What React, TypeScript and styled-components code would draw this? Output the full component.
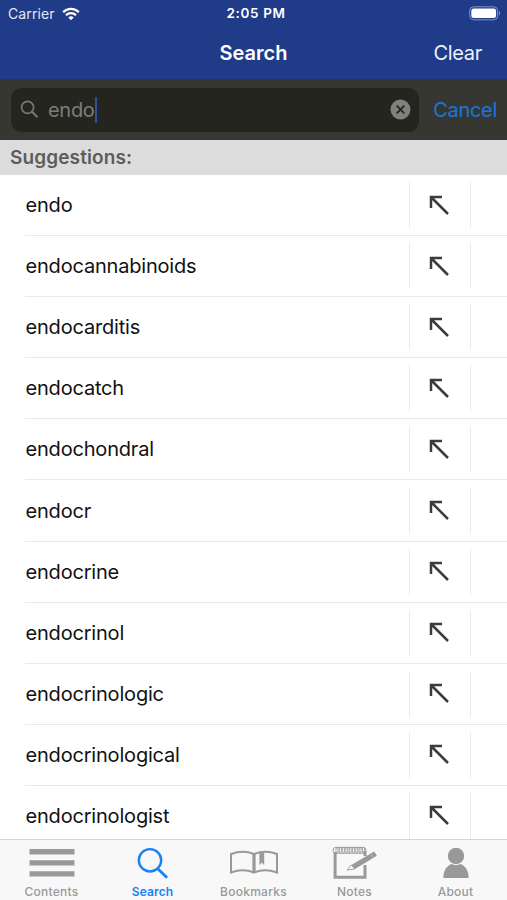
import React from 'react';
import styled, { createGlobalStyle } from 'styled-components';

const GlobalStyle = createGlobalStyle`
  * { box-sizing: border-box; }
  body { margin: 0; background: #fff; font-family: Inter, "Liberation Sans", sans-serif; }
  button { border: 0; padding: 0; background: none; font: inherit; color: inherit; }
  svg { display: block; flex: none; }
`;

const Screen = styled.div`
  width: 507px;
  height: 900px;
  display: flex;
  flex-direction: column;
  overflow: hidden;
  background: #fff;
`;

const Header = styled.header`
  height: 79px;
  flex: none;
  background: #203b87;
  color: #fff;
`;

const StatusBar = styled.div`
  height: 27px;
  display: grid;
  grid-template-columns: 1fr auto 1fr;
  align-items: center;
  padding: 0 6px 0 8px;
  font-size: 14px;
  line-height: 27px;
`;

const Carrier = styled.div`
  display: flex;
  align-items: center;
  gap: 7px;
  color: #e3e8f6;
  letter-spacing: 0.1px;
`;

const Clock = styled.div`
  font-size: 13.5px;
  font-weight: 600;
  letter-spacing: 0.65px;
  padding-left: 3px;
`;

const Battery = styled.div`
  justify-self: end;
`;

const NavBar = styled.div`
  height: 51px;
  display: grid;
  grid-template-columns: 1fr auto 1fr;
  align-items: center;
  padding-right: 25px;
  padding-left: 25px;
`;

const Title = styled.h1`
  grid-column: 2;
  margin: 0;
  font-size: 20px;
  font-weight: 600;
  letter-spacing: 0.05px;
`;

const ClearButton = styled.button`
  justify-self: end;
  font-size: 20px;
  letter-spacing: -0.3px;
  color: #eef2fc;
`;

const SearchBar = styled.div`
  height: 61px;
  flex: none;
  display: flex;
  align-items: center;
  padding: 0 10px 0 11px;
  background: #373732;
`;

const Field = styled.div`
  width: 408px;
  height: 44px;
  display: flex;
  align-items: center;
  padding: 0 8px 0 9px;
  border-radius: 11px;
  background: #252520;
`;

const Query = styled.span`
  margin-left: 9px;
  font-size: 20px;
  line-height: 26px;
  letter-spacing: -0.3px;
  color: #7d7d7a;
`;

const Caret = styled.span`
  width: 2px;
  height: 26px;
  margin-right: auto;
  background: #31509b;
`;

const CancelButton = styled.button`
  margin-left: auto;
  font-size: 20px;
  letter-spacing: -0.3px;
  color: #1877dd;
`;

const SectionTitle = styled.h2`
  height: 35px;
  flex: none;
  margin: 0;
  padding-left: 10px;
  background: #dcdcdc;
  color: #5c5c5c;
  font-size: 19px;
  font-weight: 600;
  line-height: 35px;
  letter-spacing: 0.12px;
`;

const List = styled.ul`
  flex: 1;
  min-height: 0;
  margin: 0;
  padding: 0;
  overflow: hidden;
  list-style: none;
`;

const Row = styled.li`
  height: 61.1px;
  margin-left: 25px;
  display: flex;
  align-items: center;
  border-bottom: 1px solid #e9e9e9;
`;

const Word = styled.span`
  width: 384px;
  padding-left: 0.5px;
  font-size: 20px;
  letter-spacing: -0.19px;
  color: #111;
`;

const FillButton = styled.button`
  width: 62px;
  height: 46px;
  display: flex;
  align-items: center;
  justify-content: center;
  padding-right: 2px;
  padding-bottom: 1px;
  border-left: 1px solid #ebebeb;
  border-right: 1px solid #ebebeb;
`;

const TabBar = styled.nav`
  height: 61px;
  flex: none;
  display: grid;
  grid-template-columns: repeat(5, 101px);
  padding-left: 1px;
  border-top: 1px solid #d6d6d6;
  background: #f8f8f8;
`;

const Tab = styled.div<{ $active?: boolean }>`
  display: flex;
  flex-direction: column;
  align-items: center;
  color: ${(p) => (p.$active ? '#1a82f5' : '#999')};
  font-size: 12px;
  font-weight: ${(p) => (p.$active ? 600 : 500)};
  letter-spacing: ${(p) => (p.$active ? '0.15px' : '0.25px')};
  line-height: 15px;
`;

const TabIcon = styled.span`
  height: 44px;
  display: flex;
  align-items: center;
  padding-top: 2px;
`;

const WifiIcon = () => (
  <svg width="18" height="14" viewBox="0 0 18 14" fill="none" stroke="#fff" strokeWidth="2.3">
    <path d="M1.2 5.2A11 11 0 0 1 16.8 5.2M4 8.3a7 7 0 0 1 10 0" />
    <path d="M6.3 10.5a3.9 3.9 0 0 1 5.4 0L9 13.2z" fill="#fff" stroke="none" />
  </svg>
);

const BatteryIcon = () => (
  <svg width="32" height="15" viewBox="0 0 32 15">
    <rect x=".7" y=".8" width="28" height="13" rx="4" fill="none" stroke="#8494c3" strokeWidth="1" />
    <rect x="2.3" y="2.5" width="24.8" height="9.6" rx="2.4" fill="#fff" />
    <path d="M30 5.2c1.6.7 1.6 3.5 0 4.2z" fill="#8494c3" />
  </svg>
);

const FieldSearchIcon = () => (
  <svg width="19" height="19" viewBox="0 0 19 19" fill="none" stroke="#777773" strokeWidth="1.7">
    <circle cx="7.6" cy="7.4" r="6" />
    <path d="M12 11.8l5.5 5.5" strokeWidth="2" />
  </svg>
);

const ClearFieldIcon = () => (
  <svg width="21" height="21" viewBox="0 0 21 21">
    <circle cx="10.5" cy="10.5" r="10" fill="#80807d" />
    <path d="M6.7 6.7l7.6 7.6M14.3 6.7l-7.6 7.6" stroke="#252520" strokeWidth="1.8" />
  </svg>
);

const ArrowIcon = () => (
  <svg width="20" height="20" viewBox="0 0 20 20" fill="none" stroke="#3c3c3c" strokeWidth="2.5">
    <path d="M2 13V2h11M2 2l17 17" />
  </svg>
);

const ContentsIcon = () => (
  <svg width="46" height="28" viewBox="0 0 46 28" fill="#999">
    <path d="M.5 0h45v5.5H.5zM.5 11.2h45v5.4H.5zM.5 22.2h45v5.4H.5z" />
  </svg>
);

const SearchTabIcon = () => (
  <svg width="32" height="32" viewBox="0 0 32 32" fill="none" stroke="#1a82f5" strokeWidth="2.4">
    <circle cx="13" cy="13.3" r="11.2" />
    <path d="M20.5 21.5l9.6 9.3" strokeWidth="2.8" />
  </svg>
);

const BookmarksIcon = () => (
  <svg width="50" height="26" viewBox="0 0 50 26" fill="none" stroke="#999" strokeWidth="2">
    <path d="M25 4Q14-.6 2 4v18.5q12-4.5 23 0 11-4.5 23 0V4Q36-.6 25 4z" />
    <path d="M25 4v19" strokeWidth="3.2" />
    <path d="M30.4 2.8l4.8-1v13.5l-2.4-2.8-2.4 2.8z" fill="#999" stroke="none" />
  </svg>
);

const NotesIcon = () => (
  <svg width="46" height="34" viewBox="0 0 46 34" fill="none" stroke="#999">
    <path d="M33 19v12.3H3.1V6" strokeWidth="3" />
    <path d="M33 5v5" strokeWidth="3" />
    <rect x="1" y="1.4" width="33" height="5.8" rx="2.6" strokeWidth="1" />
    {[5, 8.3, 11.6, 14.9, 18.2, 21.5, 24.8, 28.1, 31.4].map((x) => (
      <ellipse key={x} cx={x} cy="4.2" rx="1.1" ry="2.8" strokeWidth=".9" />
    ))}
    <path d="M42.1 5.5l2.8 4.2-22 13.3-3.6-4z" fill="#999" stroke="none" />
    <path d="M19.3 19l3.6 4-7.8 1.1z" fill="#f8f8f8" strokeWidth=".9" />
    <path d="M38.7 7.8l2.7 4" stroke="#c4c4c4" strokeWidth=".8" />
  </svg>
);

const AboutIcon = () => (
  <svg width="28" height="32" viewBox="0 0 28 32" fill="#999">
    <circle cx="14" cy="9" r="8.2" />
    <path d="M1.3 31C1.5 23 5.3 18.5 9.4 17.1q4.6 2.1 9.2 0c4.1 1.4 7.9 5.9 8.1 13.9z" />
  </svg>
);

const suggestions = [
  'endo', 'endocannabinoids', 'endocarditis', 'endocatch', 'endochondral', 'endocr',
  'endocrine', 'endocrinol', 'endocrinologic', 'endocrinological', 'endocrinologist',
];

const tabs = [
  { label: 'Contents', Icon: ContentsIcon },
  { label: 'Search', Icon: SearchTabIcon, active: true },
  { label: 'Bookmarks', Icon: BookmarksIcon },
  { label: 'Notes', Icon: NotesIcon },
  { label: 'About', Icon: AboutIcon },
];

export default function App() {
  return (
    <Screen>
      <GlobalStyle />
      <Header>
        <StatusBar>
          <Carrier>Carrier <WifiIcon /></Carrier>
          <Clock>2:05 PM</Clock>
          <Battery><BatteryIcon /></Battery>
        </StatusBar>
        <NavBar>
          <Title>Search</Title>
          <ClearButton>Clear</ClearButton>
        </NavBar>
      </Header>
      <SearchBar>
        <Field>
          <FieldSearchIcon />
          <Query>endo</Query>
          <Caret />
          <ClearFieldIcon />
        </Field>
        <CancelButton>Cancel</CancelButton>
      </SearchBar>
      <SectionTitle>Suggestions:</SectionTitle>
      <List>
        {suggestions.map((word) => (
          <Row key={word}>
            <Word>{word}</Word>
            <FillButton aria-label="Use suggestion"><ArrowIcon /></FillButton>
          </Row>
        ))}
      </List>
      <TabBar>
        {tabs.map(({ label, Icon, active }) => (
          <Tab key={label} $active={active}>
            <TabIcon><Icon /></TabIcon>
            {label}
          </Tab>
        ))}
      </TabBar>
    </Screen>
  );
}
